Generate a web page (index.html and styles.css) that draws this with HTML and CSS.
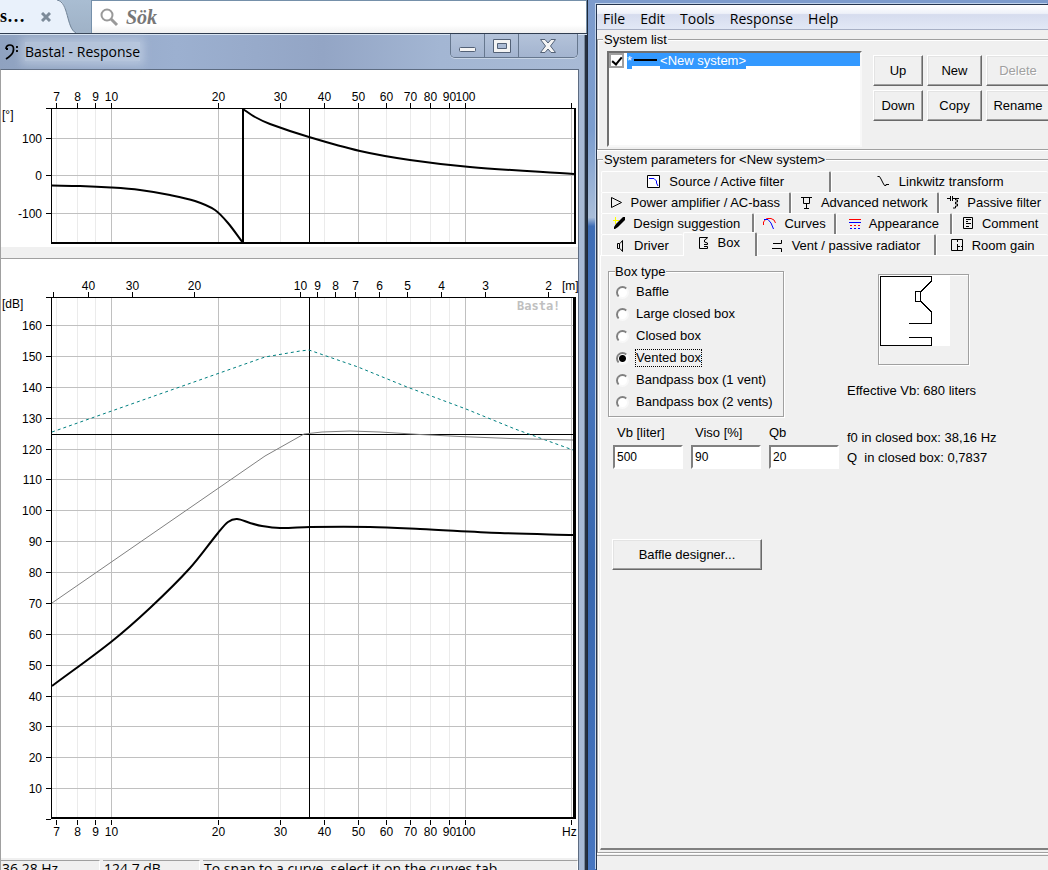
FILE: index.html
```
<!DOCTYPE html>
<html lang="en">
<head>
    <meta charset="UTF-8">
    <meta name="viewport" content="width=device-width, initial-scale=1.0">
    <title>Basta! - Response</title>
    <link rel="stylesheet" href="styles.css">
</head>
<body>
    <div class="desktop">
        <div class="left">
            <!-- browser behind the response window -->
            <div class="browser">
                <div class="browser-tab">
                    <svg class="tab-edge" width="76" height="33" viewBox="0 0 76 33">
                        <path d="M0 0H58C69 2 66 28 76 33H0Z" fill="#e9f1fb"/>
                        <path d="M57 0C69 2 66 28 76 33" fill="none" stroke="#6f8296"/>
                    </svg>
                    <span class="tab-title">s…</span>
                    <svg class="tab-close" width="10" height="10" viewBox="0 0 10 10"><path d="M1 1L9 9M9 1L1 9" stroke="#7d8b99" stroke-width="3"/></svg>
                </div>
                <label class="search">
                    <svg width="19" height="19" viewBox="0 0 19 19" fill="none" stroke="#999"><circle cx="7" cy="7" r="5.5" stroke-width="2"/><path d="M11 11L17 17" stroke-width="3"/></svg>
                    <input type="text" placeholder="Sök" aria-label="Sök">
                </label>
            </div>

            <div class="response">
                <div class="titlebar">
                    <svg width="14" height="16" viewBox="0 0 14 16"><path d="M1 5C1 2 3 1 5 1C9 1 9 5 8 8C7 11 4 13 1 15" fill="none" stroke="#000" stroke-width="1.7"/><path d="M1 4h2v2H1zM11 2h2v2h-2zM11 6h2v2h-2z"/></svg>
                    <span class="title">Basta! - Response</span>
                    <div class="win-buttons">
                        <button aria-label="Minimize"><svg width="18" height="6" viewBox="0 0 18 6"><rect x=".5" y=".5" width="16" height="4" rx="1" fill="#f4f4f4" stroke="#536176"/></svg></button>
                        <button aria-label="Maximize"><svg width="18" height="14" viewBox="0 0 18 14"><path d="M.5 .5H17.5V13.5H.5ZM4.5 4.5V9.5H13.5V4.5Z" fill="#f4f4f4" stroke="#536176" fill-rule="evenodd"/></svg></button>
                        <button aria-label="Close"><svg width="16" height="14" viewBox="0 0 16 14"><path d="M.5 .5H5L8 4L11 .5H15.5L10.500 7L15.500 13.500H11L8 10L5 13.500H.5L5.500 7Z" fill="#f4f4f4" stroke="#536176"/></svg></button>
                    </div>
                </div>
                <div class="client">
                    <svg class="chart" id="phase" viewBox="1 70 577 177"></svg>
                    <svg class="chart" id="level" viewBox="1 259 577 599"></svg>
                    <div class="status">
                        <span class="pane">36,28 Hz</span>
                        <span class="pane">124,7 dB</span>
                        <span class="pane">To snap to a curve, select it on the curves tab</span>
                    </div>
                </div>
            </div>
        </div>

        <div class="basta">
            <div class="main">
                <nav class="menu">
                    <a href="#">File</a>
                    <a href="#">Edit</a>
                    <a href="#">Tools</a>
                    <a href="#">Response</a>
                    <a href="#">Help</a>
                </nav>

                <section class="group system-list">
                    <h2>System list</h2>
                    <div class="list-row">
                        <div class="listbox">
                            <label class="item">
                                <input type="checkbox" checked>
                                <span class="fill"><span class="star">*</span><i class="line"></i><span class="name">&lt;New system&gt;</span></span>
                            </label>
                        </div>
                        <div class="actions">
                            <button class="btn">Up</button>
                            <button class="btn">New</button>
                            <button class="btn" disabled>Delete</button>
                            <button class="btn">Down</button>
                            <button class="btn">Copy</button>
                            <button class="btn">Rename</button>
                        </div>
                    </div>
                </section>

                <section class="group params">
                    <h2>System parameters for &lt;New system&gt;</h2>
                    <div class="tabs" role="tablist">
                        <div class="tab-row row1">
                            <button class="tab" role="tab"><svg width="14" height="14" viewBox="0 0 14 14"><path d="M.5 .5H12.500V12.500H.5Z" fill="#fff" stroke="#000"/><path d="M2 3.500H7L9.500 6V8L11 11" fill="none" stroke="#00f"/></svg>Source / Active filter</button>
                            <button class="tab" role="tab"><svg width="14" height="14" viewBox="0 0 14 14"><path d="M.5 1.500H2.500L4 4L6 8L7.500 10.500H9V9.500H12" fill="none" stroke="#000"/></svg>Linkwitz transform</button>
                        </div>
                        <div class="tab-row row2">
                            <button class="tab" role="tab"><svg width="12" height="14" viewBox="0 0 12 14"><path d="M.5 1.500L10.500 6.500L.5 11.500Z" fill="none" stroke="#000"/></svg>Power amplifier / AC-bass</button>
                            <button class="tab" role="tab"><svg width="12" height="14" viewBox="0 0 12 14"><path d="M0 1.500H11M2.500 1V7.500H8.500V1M5.500 7V12M3 12.500H8" fill="none" stroke="#000"/></svg>Advanced network</button>
                            <button class="tab" role="tab"><svg width="12" height="14" viewBox="0 0 12 14"><path d="M0 2.500H3M3.500 0V5M5.500 0V5M6 2.500H12M8.500 2V4H10.500V6H8.500V8H10.500V10H8.500V12H6" fill="none" stroke="#000"/></svg>Passive filter</button>
                        </div>
                        <div class="tab-row row3">
                            <button class="tab" role="tab"><svg width="12" height="14" viewBox="0 0 12 14"><path d="M2 0H3V3H6V4H3V7H2V4H0V3H2Z" fill="#ff0"/><path d="M10 0H12V3L5 10L2 12H1V10L3 7Z"/></svg>Design suggestion</button>
                            <button class="tab" role="tab"><svg width="13" height="14" viewBox="0 0 13 14" fill="none"><path d="M.5 8V5L3 2L5 1.500H8L11 3L12.500 6" stroke="#f00"/><path d="M1 2.500H5L8 6L10.500 12" stroke="#00f"/></svg>Curves</button>
                            <button class="tab" role="tab"><svg width="12" height="12" viewBox="0 0 12 12"><path d="M0 1H12V2H0ZM1 7H3V8H1ZM5 7H7V8H5ZM9 7H11V8H9Z" fill="#f00"/><path d="M0 4H12V5H0ZM1 10H3V11H1ZM5 10H7V11H5ZM9 10H11V11H9Z" fill="#00f"/></svg>Appearance</button>
                            <button class="tab" role="tab"><svg width="11" height="14" viewBox="0 0 11 14"><path d="M.5 .5H9.500V11.500H.5ZM3 2.500H8M3 4.500H5M3 6.500H8M3 9.500H6" fill="none" stroke="#000"/></svg>Comment</button>
                        </div>
                        <div class="tab-row row4">
                            <button class="tab" role="tab"><svg width="10" height="14" viewBox="0 0 10 14"><path d="M1.500 4.500H3.500V9.500H1.500ZM4 4.500L6.500 1.500V12.500L4 9.500" fill="none" stroke="#000"/></svg>Driver</button>
                            <button class="tab active" role="tab" aria-selected="true"><svg width="11" height="12" viewBox="0 0 11 12"><path d="M8.500 1V.5H.5V11.500H8.500V9.500H5M5 7.500H8.500V6L5.500 5V3L8.500 1" fill="none" stroke="#000"/></svg>Box</button>
                            <button class="tab" role="tab"><svg width="12" height="12" viewBox="0 0 12 12"><path d="M1 3.500H9.500V0M0 8.500H9.500V12" fill="none" stroke="#000"/></svg>Vent / passive radiator</button>
                            <button class="tab" role="tab"><svg width="13" height="14" viewBox="0 0 13 14"><path d="M.5 .5H11.500V11.500H.5ZM6.500 1V3M6.500 5V11M7 7.500H9M10 7.500H11" fill="none" stroke="#000"/></svg>Room gain</button>
                        </div>
                    </div>

                    <div class="panel" role="tabpanel">
                        <div class="settings">
                            <div class="box-type" role="radiogroup" aria-labelledby="box-type">
                                <h3 id="box-type">Box type</h3>
                                <label><input type="radio" name="box"><span>Baffle</span></label>
                                <label><input type="radio" name="box"><span>Large closed box</span></label>
                                <label><input type="radio" name="box"><span>Closed box</span></label>
                                <label><input type="radio" name="box" checked><span>Vented box</span></label>
                                <label><input type="radio" name="box"><span>Bandpass box (1 vent)</span></label>
                                <label><input type="radio" name="box"><span>Bandpass box (2 vents)</span></label>
                            </div>
                            <div class="fields">
                                <label>Vb [liter]<input type="text" value="500"></label>
                                <label>Viso [%]<input type="text" value="90"></label>
                                <label>Qb<input type="text" value="20"></label>
                            </div>
                            <button class="btn designer">Baffle designer...</button>
                        </div>
                        <div class="info">
                            <div class="preview">
                                <svg width="70" height="70" viewBox="0 0 70 70"><path d="M0 0H70V70H0Z" fill="#fff"/><path d="M51.500 5V.5H.5V69.500H51.500V61.500H29M29 47.500H51.500V36L41 25.500M41 15.500L51.500 5M35.500 15.500H40.500V25.500H35.500Z" fill="none" stroke="#000"/></svg>
                            </div>
                            <p class="effective">Effective Vb: 680 liters</p>
                            <p>f0 in closed box: 38,16 Hz</p>
                            <p>Q&nbsp; in closed box: 0,7837</p>
                        </div>
                    </div>
                </section>
                <div class="main-status"></div>
            </div>
        </div>
    </div>
    <script src="script.js"></script>
</body>
</html>
```
FILE: styles.css
```
* {
    box-sizing: border-box;
}
body {
    margin: 0;
    height: 100vh;
    overflow: hidden;
    font-family: "Liberation Sans", Arial, sans-serif;
    font-size: 13px;
    line-height: 16px;
    color: #000;
    background: #a9bace;
}
h2, h3, p {
    margin: 0;
    font-size: 13px;
    font-weight: normal;
}
button, input {
    font: inherit;
    color: inherit;
}
.desktop {
    display: grid;
    grid-template-columns: 587fr 461fr;
    height: 100vh;
}
.left {
    display: flex;
    flex-direction: column;
    min-width: 0;
    overflow: hidden;
}

/* browser strip */
.browser {
    display: flex;
    flex: none;
    height: 33px;
    background: linear-gradient(#a9bdd2, #9fb2c7);
}
.browser-tab {
    position: relative;
    display: flex;
    align-items: center;
    width: 91px;
}
.tab-edge {
    position: absolute;
    left: 0;
    top: 0;
}
.tab-title {
    position: relative;
    width: 41px;
    font: bold 18px "Liberation Serif", serif;
}
.tab-close {
    position: relative;
}
.search {
    display: flex;
    flex: 1;
    align-items: center;
    gap: 7px;
    padding-left: 8px;
    border: 1px solid #7590aa;
    border-bottom: 0;
    background: linear-gradient(#fff 75%, #f0f0f0);
}
.search input {
    flex: 1;
    min-width: 0;
    padding: 0;
    border: 0;
    background: none;
    font: italic bold 20px "Liberation Serif", serif;
}
.search input::placeholder {
    color: #777;
}

/* response window */
.response {
    flex: none;
    padding-right: 9px;
    border-top: 1px solid #303d50;
    background: linear-gradient(90deg, #8fa2c0, #9cb0d0 30%, #93a5c5 55%, #a3b6d3 75%, #a8bad5);
    box-shadow: inset 0 1px #d8e4f2, inset -2px 0 #263040, inset -3px 0 #78899d;
}
.titlebar {
    display: flex;
    align-items: center;
    height: 35px;
    padding-left: 5px;
    gap: 6px;
    font: 14px "Open Sans", sans-serif;
}
.title {
    background: rgba(225, 234, 244, .4);
    box-shadow: 0 0 9px 4px rgba(225, 234, 244, .4);
}
.win-buttons {
    display: flex;
    align-self: flex-start;
    margin-left: auto;
    border: 1px solid #66778e;
    border-top: 0;
    border-radius: 0 0 5px 5px;
    overflow: hidden;
    box-shadow: 0 1px #c8d5e6;
}
.win-buttons button {
    display: flex;
    align-items: center;
    justify-content: center;
    width: 34px;
    height: 23px;
    padding: 0;
    border: 0;
    border-right: 1px solid #66778e;
    background: linear-gradient(#b4c3da, #a3b4cf);
}
.win-buttons button:first-child svg {
    margin-top: 8px;
}
.win-buttons button:last-child {
    width: 58px;
    border-right: 0;
}
.client {
    border: 1px solid #5d6c82;
    border-right: 0;
    border-left-color: #a0a0a0;
    background: #f0f0f0;
    box-shadow: 1px 0 #5d6c82;
}
.chart {
    display: block;
    width: 100%;
    background: #fff;
    font-family: "Liberation Sans", Arial, sans-serif;
    font-size: 12px;
}
#phase {
    margin-bottom: 11px;
}
#level {
    border-top: 1px solid #a0a0a0;
}
.chart .tick-text {
    text-anchor: middle;
}
.chart .side-text {
    text-anchor: end;
}
.chart .minor {
    stroke: #ebebeb;
}
.chart .major {
    stroke: #c0c0c0;
}
.chart .axis {
    stroke: #000;
    fill: none;
}
.chart .thick {
    stroke: #000;
    stroke-width: 2;
    fill: none;
}
.chart .edge {
    stroke: #000;
    stroke-width: 3;
}
.chart .gray {
    stroke: #808080;
    fill: none;
}
.chart .teal {
    stroke: #008080;
    stroke-dasharray: 3 3;
    fill: none;
}
.chart .brand {
    fill: #c0c0c0;
    font: bold 12px "DejaVu Sans Mono", monospace;
}
.status {
    display: grid;
    grid-template-columns: 99px 97px 1fr;
    gap: 3px;
    padding-top: 2px;
    font: 14px/16px "Open Sans", sans-serif;
}
.pane {
    height: 20px;
    padding-left: 1px;
    border: 1px solid #a0a0a0;
    border-left: 0;
    border-right-color: #fff;
    white-space: nowrap;
}

/* main window */
.basta {
    min-width: 0;
    padding: 4px 0 0 8px;
    overflow: hidden;
    background: linear-gradient(#7d9bcc, #7b9dce 15%, #a9bdd9 25%, #3d6cb5 26%, #4674bb 45%, #3766ae 65%, #4776c0);
    border-left: 1px solid #1d2838;
}
.main {
    display: flex;
    flex-direction: column;
    height: 100%;
    border: solid #24334c;
    border-width: 1px 0 0 1px;
    box-shadow: -1px -1px #c2d4ec;
    background: #f0f0f0;
}
.menu {
    display: flex;
    flex: none;
    gap: 15px;
    height: 25px;
    padding: 4px 6px 0;
    border-bottom: 1px solid #a8b0c5;
    background: linear-gradient(#fff, #eef1f9 35%, #d6dcee 40%, #e2e8f6);
    font: 14px/20px "Open Sans", sans-serif;
}
.menu a {
    color: #000;
    text-decoration: none;
}
.group {
    position: relative;
    margin-top: 9px;
    border: 1px solid #a0a0a0;
    border-right: 0;
    box-shadow: inset 1px 1px #fff, 0 1px #fff;
}
.group > h2 {
    position: absolute;
    left: 5px;
    top: -8px;
    padding: 0 1px;
    background: #f0f0f0;
}
.system-list {
    flex: none;
    padding: 11px 0 2px 9px;
}
.list-row {
    display: grid;
    grid-template-columns: 255fr 175fr;
    gap: 11px;
}
.listbox {
    height: 96px;
    border: 2px solid #f8f8f8;
    border-top-color: #707070;
    border-left-color: #707070;
    background: #fff;
}
.item {
    display: flex;
    align-items: flex-start;
}
.item input {
    appearance: none;
    flex: none;
    width: 15px;
    height: 15px;
    margin: 0 3px 0 0;
    border: 2px solid #a0a0a0;
    background: #fff;
    display: grid;
    place-items: center;
}
.item input:checked::after {
    content: "";
    width: 4px;
    height: 8px;
    margin-bottom: 2px;
    border: solid #000;
    border-width: 0 2px 2px 0;
    transform: rotate(40deg);
}
.fill {
    display: flex;
    flex: 1;
    align-items: flex-start;
    height: 13px;
    color: #fff;
    background: #3399ff;
}
.star, .name {
    background: #3399ff;
}
.line {
    width: 23px;
    height: 2px;
    margin: 6px 3px 0 2px;
    background: #000;
}
.actions {
    display: grid;
    grid-template-columns: 50fr 55fr 64fr;
    grid-auto-rows: 31px;
    gap: 4px;
    padding-top: 4px;
    margin-right: -2px;
    align-content: start;
}
.btn {
    min-width: 0;
    padding: 0;
    border: 1px solid #fff;
    border-right-color: #696969;
    border-bottom-color: #696969;
    background: #f0f0f0;
    box-shadow: inset -1px -1px #a0a0a0, inset 1px 1px #e3e3e3;
}
.btn:disabled {
    color: #a0a0a0;
    text-shadow: 1px 1px #fff;
}

/* tabs */
.params {
    display: flex;
    flex: 1;
    flex-direction: column;
    min-height: 0;
    padding: 11px 0 2px 2px;
}
.tabs {
    padding-left: 1px;
}
.tab-row {
    display: grid;
    height: 21px;
}
.row1 {
    grid-template-columns: 231fr 217fr;
}
.row2 {
    grid-template-columns: 190fr 149fr 109fr;
}
.row3 {
    grid-template-columns: 153fr 83fr 116fr 96fr;
}
.row4 {
    grid-template-columns: 82fr 74fr 180fr 112fr;
}
.tab {
    display: flex;
    align-items: center;
    justify-content: center;
    gap: 8px;
    min-width: 0;
    padding: 0;
    border: 1px solid #fff;
    border-right: 2px solid #808080;
    border-bottom: 0;
    border-radius: 2px 2px 0 0;
    background: #f0f0f0;
    white-space: nowrap;
}
.tab svg {
    flex: none;
}
.tab:last-child, .row4 .tab:first-child {
    border-right: 0;
}
.tab.active {
    position: relative;
    height: 24px;
    margin-top: -2px;
    padding-bottom: 3px;
}
.panel {
    display: flex;
    flex: 1;
    gap: 7px;
    min-height: 0;
    padding: 15px 0 0 7px;
    border: 1px solid #fff;
    border-right: 0;
    border-bottom: 2px solid #808080;
}
.box-type {
    position: relative;
    width: 176px;
    padding: 9px 0 3px 7px;
    border: 1px solid #a0a0a0;
    box-shadow: inset 1px 1px #fff, 1px 1px #fff;
}
.box-type h3 {
    position: absolute;
    left: 6px;
    top: -8px;
    background: #f0f0f0;
}
.box-type label {
    display: flex;
    align-items: center;
    gap: 6px;
    height: 22px;
}
.box-type input {
    appearance: none;
    width: 13px;
    height: 13px;
    margin: 0;
    border: 2px solid #f8f8f8;
    border-top-color: #808080;
    border-left-color: #808080;
    border-radius: 50%;
    background: #fff;
}
.box-type input:checked {
    background: radial-gradient(circle, #000 3px, #fff 4px);
}
.box-type label span {
    border: 1px dotted transparent;
}
.box-type input:checked + span {
    border-color: #000;
}
.fields {
    display: flex;
    gap: 8px;
    margin: 8px 0 0 5px;
}
.fields label {
    width: 70px;
    text-indent: 4px;
}
.fields input {
    display: block;
    width: 100%;
    height: 24px;
    margin-top: 4px;
    padding: 0 2px;
    border: 2px solid #fff;
    border-top-color: #808080;
    border-left-color: #808080;
    background: #fff;
    font-size: 12px;
}
.fields label:last-child {
    text-indent: 0;
}
.designer {
    width: 150px;
    height: 31px;
    margin: 70px 0 0 4px;
}
.settings {
    flex: none;
    width: 232px;
}
.info {
    white-space: nowrap;
}
.info p {
    line-height: 20px;
}
.preview {
    width: 91px;
    height: 91px;
    margin: 3px 0 0 31px;
    padding: 1px;
    border: 1px solid #a0a0a0;
    box-shadow: inset 1px 1px #fff, 1px 1px #fff;
}
.preview svg {
    display: block;
    shape-rendering: crispEdges;
}
.info .effective {
    margin: 16px 0 27px;
}
.main-status {
    flex: none;
    height: 15px;
    margin-top: 2px;
    border-top: 1px solid #a0a0a0;
}
```
FILE: script.js
```
const phase = document.getElementById('phase');
const level = document.getElementById('level');

// frequency axis, 10 Hz to 100 Hz is one decade
const freqX = f => Math.floor(111.7 + 353.5 * Math.log10(f / 10)) + 0.5;
const degY = d => Math.round(175 - d * 0.375) + 0.5;
const dbY = d => Math.round(819 - d * 3.087) + 0.5;

function add(svg, tag, attrs, text) {
    const el = document.createElementNS('http://www.w3.org/2000/svg', tag);
    for (const key in attrs) el.setAttribute(key, attrs[key]);
    if (text !== undefined) el.textContent = text;
    svg.appendChild(el);
}
function path(svg, cls, d) {
    add(svg, 'path', { class: cls, d: d });
}
function label(svg, cls, x, y, text) {
    add(svg, 'text', { class: cls, x: x, y: y }, text);
}
// smooth curve through the given points
function curve(points) {
    let d = `M${points[0]}`;
    for (let i = 0; i < points.length - 1; i++) {
        const p0 = points[i - 1] || points[i];
        const p1 = points[i];
        const p2 = points[i + 1];
        const p3 = points[i + 2] || p2;
        const k = (p2[0] - p1[0]) / 3;
        const m1 = (p2[1] - p0[1]) / (p2[0] - p0[0]);
        const m2 = (p3[1] - p1[1]) / (p3[0] - p1[0]);
        d += `C${p1[0] + k},${p1[1] + k * m1} ${p2[0] - k},${p2[1] - k * m2} ${p2}`;
    }
    return d;
}

const freqs = [7, 8, 9, 10, 20, 30, 40, 50, 60, 70, 80, 90, 100, 200];
const majors = [10, 20, 50, 100, 200];

function grid(svg, top, bottom) {
    freqs.forEach(f => {
        path(svg, majors.includes(f) ? 'major' : 'minor', `M${freqX(f)} ${top}V${bottom}`);
    });
}

// phase
grid(phase, 109, 242);
[100, 0, -100].forEach(d => {
    path(phase, 'major', `M52 ${degY(d)}H574`);
    path(phase, 'axis', `M46 ${degY(d)}H51`);
    label(phase, 'side-text', 42, degY(d) + 4, d);
});
freqs.forEach(f => {
    path(phase, 'axis', `M${freqX(f)} 103V108`);
    if (f < 200) label(phase, 'tick-text', freqX(f), 101, f);
});
path(phase, 'axis', 'M46 108.5H575M51.5 108V243M309.5 108V243');
path(phase, 'thick', 'M51 243H576M575 108V243');
path(phase, 'thick', curve([[52, 185.5], [80, 186], [111, 187.5], [140, 190], [170, 195], [195, 201], [215, 210], [228, 223], [243, 243]]));
path(phase, 'thick', 'M243 109V243');
path(phase, 'thick', curve([[243, 109], [255, 117], [270, 124], [309, 137], [360, 151], [410, 160], [470, 167], [574, 174]]));
label(phase, '', 2, 119, '[°]');

// sound pressure level
grid(level, 298, 818);
for (let d = 10; d <= 160; d += 10) {
    path(level, 'major', `M52 ${dbY(d)}H574`);
    path(level, 'axis', `M46 ${dbY(d)}H51`);
    label(level, 'side-text', 42, dbY(d) + 4, d);
}
freqs.forEach(f => {
    path(level, 'axis', `M${freqX(f)} 820V825`);
    if (f < 200) label(level, 'tick-text', freqX(f), 836, f);
});
// wavelength scale on top
[50, 40, 30, 20, 10, 9, 8, 7, 6, 5, 4, 3, 2].forEach(m => {
    const x = freqX(343 / m);
    path(level, 'axis', `M${x} 292V297`);
    if (m < 50) label(level, 'tick-text', x, 290, m);
});
label(level, '', 562, 290, '[m]');
label(level, '', 562, 836, 'Hz');
label(level, '', 2, 308, '[dB]');
label(level, 'brand', 517, 310, 'Basta!');
path(level, 'axis', 'M46 297.5H575M51.5 297V819M46 819.5H51M309.5 297V819M52 434.5H574');
path(level, 'thick', 'M51 818H576');
path(level, 'edge', 'M574.5 297V819');
path(level, 'teal', 'M52 432L265 357L300 351L309 350L358 367L407 387L466 409L515 429L573 450');
path(level, 'gray', 'M52 603L265 456L304 434L322 432L350 431L380 432L420 434.5L460 436.5L510 438.5L573 440');
path(level, 'thick', curve([[52, 686], [111, 642], [150, 608], [190, 568], [218, 533], [228, 522], [237, 519], [250, 523], [262, 526], [280, 528], [310, 527], [370, 527], [420, 529], [500, 533], [574, 535]]));
```
